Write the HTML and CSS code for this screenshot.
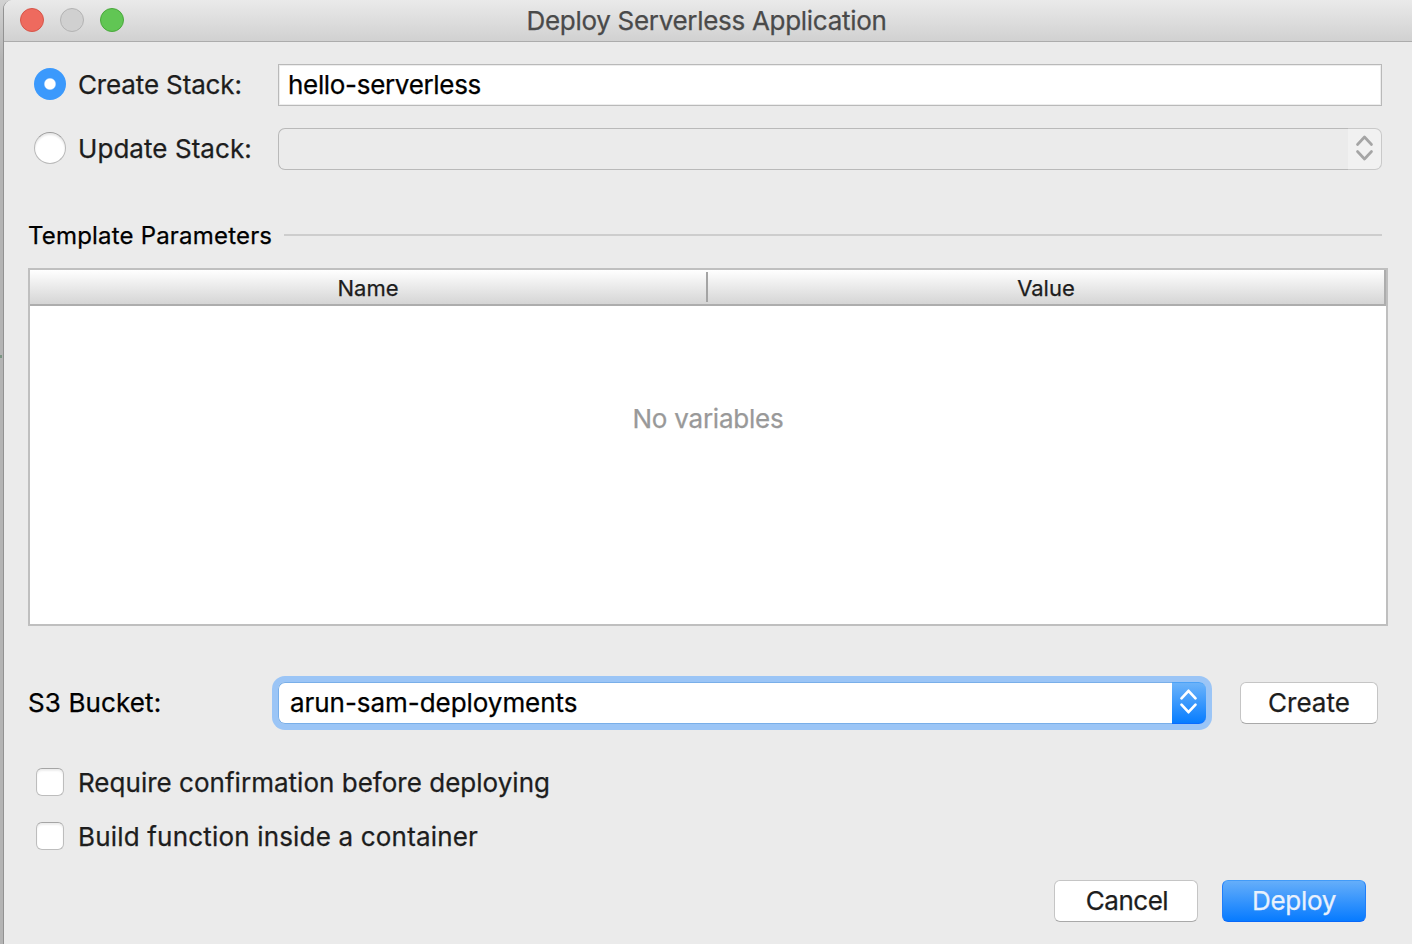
FILE: index.html
```html
<!DOCTYPE html>
<html lang="en">
<head>
<meta charset="utf-8">
<title>Deploy Serverless Application</title>
<link rel="stylesheet" href="styles.css">
</head>
<body>
<span class="backdrop-mark"></span>
<div class="window">
  <header class="titlebar">
    <div class="lights"><span class="light close"></span><span class="light minimize"></span><span class="light maximize"></span></div>
    <h1 class="title"><span class="t-title">Deploy Serverless Application</span></h1>
  </header>
  <main class="content">
    <div class="row stack-row">
      <label class="choice"><span class="radio selected"></span><span class="t-create">Create Stack:</span></label>
      <div class="textfield"><span class="t-hello">hello-serverless</span></div>
    </div>
    <div class="row stack-row update-row">
      <label class="choice"><span class="radio"></span><span class="t-update">Update Stack:</span></label>
      <div class="combo disabled">
        <div class="combo-value"></div>
        <div class="combo-arrow"><svg width="34" height="42" viewBox="0 0 34 42"><path d="M9.5 16.5 16.5 9 23.5 16.5M9.5 23.5 16.5 31 23.5 23.5"/></svg></div>
      </div>
    </div>
    <div class="section"><span class="t-section">Template Parameters</span><span class="rule"></span></div>
    <div class="table">
      <div class="table-head"><div class="th"><span class="t-name">Name</span></div><span class="divider"></span><div class="th"><span class="t-value">Value</span></div></div>
      <div class="table-body"><span class="t-empty">No variables</span></div>
    </div>
    <div class="row bucket-row">
      <span class="bucket-label"><span class="t-bucket">S3 Bucket:</span></span>
      <div class="combo focused">
        <div class="combo-value"><span class="t-arun">arun-sam-deployments</span></div>
        <div class="combo-arrow"><svg width="34" height="42" viewBox="0 0 34 42"><path d="M9.5 16.3 16.5 8.8 23.5 16.3M9.5 22.7 16.5 30.2 23.5 22.7"/></svg></div>
      </div>
      <button class="button create"><span class="t-btn-create">Create</span></button>
    </div>
    <label class="choice check-row"><span class="checkbox"></span><span class="t-require">Require confirmation before deploying</span></label>
    <label class="choice check-row second"><span class="checkbox"></span><span class="t-build">Build function inside a container</span></label>
    <footer class="actions">
      <button class="button"><span class="t-cancel">Cancel</span></button>
      <button class="button primary"><span class="t-deploy">Deploy</span></button>
    </footer>
  </main>
</div>
</body>
</html>
```
FILE: styles.css
```css
* { box-sizing: border-box; }
body {
  margin: 0;
  height: 944px;
  overflow: hidden;
  background: linear-gradient(#d2d2d2, #b4b4b4 60px);
  font: 26px/32px Inter, "Liberation Sans", sans-serif;
  color: #1d1d1d;
  -webkit-text-stroke: 0.25px;
}
.backdrop-mark { position: absolute; left: 0; top: 355px; width: 2px; height: 3px; background: #7b9583; }
.window {
  margin-left: 3px;
  height: 944px;
  display: flex;
  flex-direction: column;
  border-left: 1px solid #929292;
  border-top-left-radius: 9px;
  background: #ebebeb;
  overflow: hidden;
}
.titlebar {
  height: 42px;
  display: grid;
  grid-template-columns: 120px 1fr 123px;
  border-bottom: 1px solid #acacac;
  background: linear-gradient(#eaeaea, #d1d1d1);
}
.lights { display: flex; gap: 16px; padding: 8px 0 0 16px; }
.light { width: 24px; height: 24px; border-radius: 50%; border: 1px solid; }
.close { background: #ee6a5e; border-color: #d65549; }
.minimize { background: #d0d0d0; border-color: #b3b3b3; }
.maximize { background: #61c654; border-color: #4aa83c; }
.title { margin: 0; padding-top: 5px; text-align: center; font: inherit; color: #4a4a4a; }
.content { padding: 22px 24px 0; display: flex; flex-direction: column; }
span { white-space: nowrap; }
.row { display: flex; height: 42px; }
.stack-row { margin-right: 6px; }
.stack-row .choice { width: 250px; height: 41px; }
.update-row { margin-top: 22px; }
.choice { display: flex; align-items: center; gap: 12px; padding-left: 6px; }
.radio {
  width: 32px;
  height: 32px;
  margin-bottom: 1px;
  border-radius: 50%;
  border: 1px solid #b9b9b9;
  border-top-color: #9c9c9c;
  background: #fff;
  box-shadow: inset 0 2px 2px #e8e8e8;
}
.radio.selected { border: 0; box-shadow: none; background: radial-gradient(circle, #fff 5px, #3b99fc 6.3px); }
.textfield { flex: 1; border: 1px solid #b9b9b9; background: #fff; box-shadow: inset 0 0 0 1px #ededed; padding: 4px 9px; color: #000; }
.combo { flex: 1; display: flex; border-radius: 7px; }
.combo-value { flex: 1; border: 1px solid #b9b9b9; border-right: 0; border-radius: 7px 0 0 7px; }
.combo-arrow { width: 34px; border-radius: 0 7px 7px 0; overflow: hidden; }
.combo-arrow svg { display: block; margin-top: -1px; fill: none; stroke-width: 2.7; stroke-linecap: round; stroke-linejoin: round; }
.disabled .combo-arrow { border: 1px solid #c9c9c9; border-left: 0; background: #f1f1f1; }
.disabled svg { stroke: #a5a5a5; }
.focused { flex: none; width: 928px; box-shadow: 0 0 0 6px #9bc5f6; }
.focused .combo-value { background: #fff; border-color: #79afe9; padding: 4px 11px; color: #000; }
.focused .combo-arrow { background: linear-gradient(#6bb3fa, #077dff); border-top: 1px solid #4ba2f7; border-bottom: 1px solid #0a6cff; }
.focused svg { stroke: #fff; }
.section { display: flex; align-items: center; gap: 12px; height: 32px; margin: 49px 6px 0 0; font-size: 24px; color: #000; }
.rule { flex: 1; height: 2px; background: #cdcdcd; }
.table { width: 1360px; height: 358px; margin-top: 17px; border: 2px solid #bfbfbf; background: #fff; }
.table-head { display: flex; height: 36px; border-bottom: 2px solid #adadad; border-right: 2px solid #adadad; background: linear-gradient(#fff, #d5d5d5); font-size: 22px; line-height: 36px; }
.th { flex: 1; text-align: center; }
.divider { width: 2px; height: 30px; margin-top: 2px; background: #a4a4a4; }
.table-body { padding-top: 97px; text-align: center; color: #999; }
.bucket-row { margin-top: 56px; }
.bucket-label { width: 250px; padding-top: 5px; color: #000; }
.button {
  width: 144px;
  height: 42px;
  padding: 0;
  border: 1px solid #c5c5c5;
  border-bottom-color: #a9a9a9;
  border-radius: 6px;
  background: #fff;
  font: inherit;
  color: #1d1d1d;
}
.button.create { width: 138px; margin-left: 34px; }
.primary { background: linear-gradient(#65aefa, #077bff); border-color: #429bf8 #207ffa #0968f8; color: #e9f1fc; }
.check-row { height: 28px; margin-top: 44px; padding-left: 8px; gap: 14px; }
.check-row.second { margin-top: 26px; }
.checkbox { width: 28px; height: 28px; border: 1px solid #bdbdbd; border-top-color: #a5a5a5; border-radius: 6px; background: #fff; box-shadow: inset 0 2px 2px #eee; }
.actions { display: flex; justify-content: flex-end; gap: 24px; margin-top: 30px; padding-right: 22px; }

/* Per-label tracking */
.t-title { letter-spacing: -0.3px; }
.t-create { letter-spacing: -0.14px; }
.t-update { letter-spacing: 0.06px; }
.t-hello { letter-spacing: -0.32px; }
.t-section { letter-spacing: 0.19px; padding-top: 2px; }
.t-empty { letter-spacing: -0.22px; }
.t-bucket { letter-spacing: 0.12px; }
.t-arun { letter-spacing: -0.05px; }
.t-require { padding-top: 2px; letter-spacing: 0.02px; }
.t-build { padding-top: 2px; letter-spacing: 0.18px; }
.t-cancel { letter-spacing: -0.5px; padding-left: 2px; }
.t-deploy { letter-spacing: -0.3px; }
```
